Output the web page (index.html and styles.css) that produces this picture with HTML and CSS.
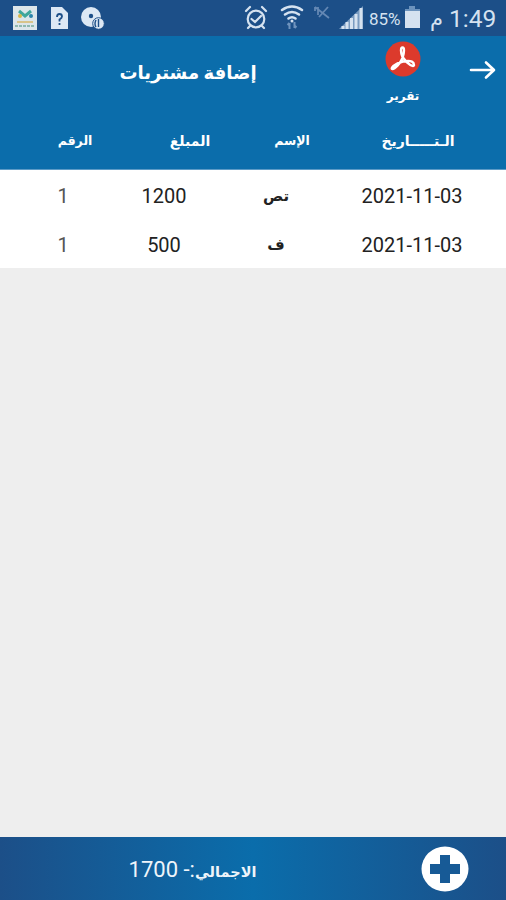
FILE: index.html
```html
<!DOCTYPE html>
<html lang="ar">
<head>
    <meta charset="UTF-8">
    <meta name="viewport" content="width=device-width, initial-scale=1.0">
    <title>إضافة مشتريات</title>
    <link rel="stylesheet" href="styles.css">
</head>
<body>
    <div class="status-bar">
        <svg class="notifications" width="110" height="36" viewBox="0 0 110 36">
            <rect x="13" y="6" width="24" height="24" fill="#dce6ea"/>
            <path d="M19 11l6 5 6-5" fill="none" stroke="#3fa79b" stroke-width="3"/>
            <circle cx="20" cy="16" r="2" fill="#d8b74a"/>
            <circle cx="31" cy="16" r="2" fill="#2c85ab"/>
            <path d="M17 22h16" stroke="#d8c48a" stroke-width="2"/>
            <path d="M15 26h20" stroke="#8fb9b0" stroke-width="2" stroke-dasharray="3 1"/>
            <path d="M51 7h11l6 6v16H51z" fill="#dce8f4"/>
            <path d="M57 17q0-3 2.500-3t2.500 2.500q0 1.500-2.500 3v2M59.500 23v2" fill="none" stroke="#1c4f88" stroke-width="1.800"/>
            <circle cx="91" cy="17" r="10" fill="#dce8f4"/>
            <circle cx="91" cy="16" r="2.200" fill="#1c4f88"/>
            <circle cx="98.500" cy="23.500" r="5.800" fill="#dce8f4" stroke="#1c4f88"/>
            <path d="M98.500 19v8M96 20q-2 4 0 7" fill="none" stroke="#1c4f88" stroke-width="1.400"/>
        </svg>
        <div class="indicators">
            <svg width="122" height="36" viewBox="0 0 122 36">
                <g fill="none" stroke="#d5e2f0" stroke-width="2.200" stroke-linecap="round">
                    <circle cx="15" cy="19" r="8.300"/>
                    <path d="M10.500 19l3.500 3 6-6M5 11l4-4M25 11l-4-4M9 26l-2 2M21 26l2 2"/>
                    <path d="M41 10q10-7 20 0M44 14.500q7-5 14 0M47.500 18.500q3.500-2.500 7 0" stroke-width="2.600"/>
                </g>
                <circle cx="51" cy="21" r="1.500" fill="#d5e2f0"/>
                <path d="M48.500 29v-6m-2 2l2-2M53.500 22v6m2-2l-2 2" fill="none" stroke="#6f93bd" stroke-width="2"/>
                <path d="M74 7v4M77 7v8M74 7l14 11M87 7l-9 10" fill="none" stroke="#6488b4" stroke-width="1.800"/>
                <path d="M98 29L122 6v23z" fill="#799bc0"/>
                <path d="M102 26v3M106 22v7M110.500 18v11M115 14v15M120 8v21" stroke="#d5e2f0" stroke-width="3"/>
            </svg>
            <span class="percent">85%</span>
            <svg class="battery" width="17" height="36" viewBox="0 0 17 36">
                <path d="M5 6h6v3h5v2H1V9h4z" fill="#6c93bd"/>
                <path d="M1 11h15v17H1z" fill="#d5e2f0"/>
            </svg>
            <span class="period">م</span>
            <span class="clock">1:49</span>
        </div>
    </div>

    <div class="toolbar">
        <h1>إضافة مشتريات</h1>
        <div class="report">
            <svg width="36" height="36" viewBox="0 0 36 36">
                <circle cx="18" cy="18" r="17.500" fill="#dc3a2c"/>
                <path d="M17.500 16C15.500 11 15.500 6.500 17.500 6.500S19.500 11 17.500 17C15 23 10 28 7.500 28S9 22.500 18 20.500S29 21.500 29 24S23 24 17.500 16z" fill="none" stroke="#fff" stroke-width="2.400" stroke-linejoin="round"/>
            </svg>
            <span>تقرير</span>
        </div>
        <svg class="arrow" width="28" height="20" viewBox="0 0 28 20">
            <path d="M2 10h22M17 2.500l8 7.500-8 7.500" fill="none" stroke="#fff" stroke-width="2.600" stroke-linecap="round" stroke-linejoin="round"/>
        </svg>
    </div>

    <div class="table-head">
        <span class="short">الرقم</span>
        <span>المبلغ</span>
        <span class="short">الإسم</span>
        <span>الـتـــــاريخ</span>
    </div>

    <div class="table-body">
        <div class="row">
            <span class="number">1</span>
            <span>1200</span>
            <span class="name">تص</span>
            <span>2021-11-03</span>
        </div>
        <div class="row">
            <span class="number">1</span>
            <span>500</span>
            <span class="name">ف</span>
            <span>2021-11-03</span>
        </div>
    </div>

    <div class="footer">
        <div class="total" dir="rtl"><b>الاجمالي</b>:- <span>1700</span></div>
        <svg class="add" width="48" height="46" viewBox="0 0 48 46">
            <ellipse cx="24" cy="23" rx="23.500" ry="22.500" fill="#fff"/>
            <path d="M19 9h10v9h10v10H29v9H19v-9H9V18h10z" fill="#175a96"/>
        </svg>
    </div>
</body>
</html>
```
FILE: styles.css
```css
* {
    box-sizing: border-box;
}
body {
    margin: 0;
    height: 900px;
    display: flex;
    flex-direction: column;
    background: #eee;
    font-family: Roboto, "DejaVu Sans", sans-serif;
    white-space: nowrap;
    overflow: hidden;
}
svg {
    display: block;
    flex: none;
}
.status-bar {
    height: 36px;
    display: flex;
    justify-content: space-between;
    background: #1c4f88;
    color: #d5e2f0;
}
.indicators {
    display: flex;
    align-items: center;
    width: 265px;
}
.percent {
    width: 33px;
    margin-left: 6px;
    font-size: 17px;
    padding-top: 2px;
}
.battery {
    margin-left: 2px;
}
.period {
    margin-left: 9px;
    width: 14px;
    padding-top: 2px;
    font-size: 21px;
}
.clock {
    margin-left: 5px;
    padding-top: 1px;
    font-size: 24.5px;
}
.toolbar {
    height: 84px;
    display: flex;
    background: #0b6dab;
    color: #fff;
}
.toolbar h1 {
    margin: 0;
    width: 376px;
    padding-top: 25px;
    text-align: center;
    font-size: 18px;
    line-height: 24px;
}
.report {
    width: 54px;
    padding-top: 5px;
    display: flex;
    flex-direction: column;
    align-items: center;
    font-size: 12px;
    line-height: 18px;
    font-weight: bold;
}
.report span {
    margin-top: 10px;
}
.arrow {
    margin: 24px 0 0 39px;
}
.table-head {
    height: 50px;
    display: grid;
    grid-template-columns: 150px 80px 124px 128px;
    background: #0b6dab;
    border-bottom: 1px solid #5c9bc7;
    color: #fff;
    font-size: 14px;
    font-weight: bold;
    line-height: 42px;
    text-align: center;
}
.table-head .short {
    font-size: 12.5px;
}
.table-body {
    flex: 1;
}
.row {
    height: 49px;
    display: grid;
    grid-template-columns: 126px 76px 148px 124px;
    background: #fff;
    color: #222;
    font-size: 20px;
    line-height: 53px;
    text-align: center;
}
.number {
    color: #555;
}
.name {
    font-size: 15px;
    font-weight: bold;
}
.footer {
    height: 63px;
    display: flex;
    align-items: center;
    background: linear-gradient(90deg, #1c4f88, #0a6dab 50%, #1c4f88);
    color: #eef4fa;
}
.total {
    width: 385px;
    padding-top: 1px;
    text-align: center;
    font-size: 22px;
}
.total b {
    font-size: 14.5px;
}
.add {
    margin-left: 36px;
}
```
